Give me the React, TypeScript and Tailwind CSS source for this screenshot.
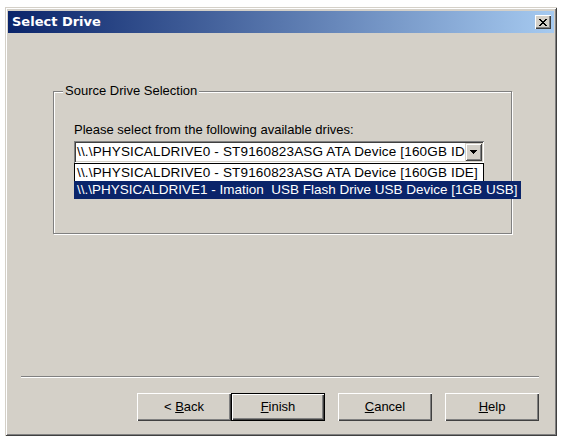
import React from "react";

const xPixels = [
  "XX....XX",
  ".XX..XX.",
  "..XXXX..",
  "...XX...",
  "..XXXX..",
  ".XX..XX.",
  "XX....XX",
];

function CloseGlyph() {
  const rects: React.ReactElement[] = [];
  xPixels.forEach((row, y) =>
    row.split("").forEach((c, x) => {
      if (c === "X") rects.push(<rect key={`${x}-${y}`} x={x} y={y} width={1} height={1} fill="#000" />);
    })
  );
  return (
    <svg width="8" height="7" viewBox="0 0 8 7" shapeRendering="crispEdges">
      {rects}
    </svg>
  );
}

function Btn({
  children,
  isDefault,
  className,
}: {
  children: React.ReactNode;
  isDefault?: boolean;
  className?: string;
}) {
  return (
    <div
      className={
        "w-[94px] h-[28px] bg-[#d4d0c8] flex items-center justify-center text-[13px] leading-[16px] text-black " +
        (isDefault
          ? "shadow-[inset_0_0_0_1px_#000,inset_2px_2px_0_#fff,inset_-2px_-2px_0_#404040,inset_-3px_-3px_0_#808080] "
          : "shadow-[inset_1px_1px_0_#fff,inset_-1px_-1px_0_#404040,inset_-2px_-2px_0_#808080] ") +
        (className ?? "")
      }
    >
      <span className="whitespace-pre">{children}</span>
    </div>
  );
}

export default function App() {
  return (
    <div className="w-[564px] h-[443px] bg-white pl-[5px] pt-[7px] font-['Liberation_Sans',Arial,sans-serif] text-black">
      <div className="w-[552px] h-[429px] bg-[#d4d0c8] px-[3px] pb-[3px] pt-[4px] flex flex-col shadow-[inset_1px_1px_0_#d4d0c8,inset_-1px_-1px_0_#404040,inset_2px_2px_0_#ffffff,inset_-2px_-2px_0_#808080]">
        {/* Title bar */}
        <div className="h-[22px] shrink-0 flex items-center bg-[linear-gradient(to_right,#0a246a,#a6caf0)]">
          <span className="pl-[4px] font-['DejaVu_Sans',sans-serif] font-bold text-[13px] leading-[16px] text-white">
            Select Drive
          </span>
          <div className="ml-auto mr-[3px] w-[16px] h-[14px] bg-[#d4d0c8] flex items-center justify-center shadow-[inset_1px_1px_0_#fff,inset_-1px_-1px_0_#404040,inset_-2px_-2px_0_#808080]">
            <CloseGlyph />
          </div>
        </div>

        {/* Body */}
        <div className="flex-1 flex flex-col">
          <div className="relative ml-[45px] mr-[42px] mt-[58px] h-[143px] border border-[#808080] shadow-[inset_1px_1px_0_#fff,1px_1px_0_#fff] pl-[20px] pt-[30px]">
            <span className="absolute left-[9px] -top-[9px] bg-[#d4d0c8] px-[2px] text-[13px] leading-[16px]">
              Source Drive Selection
            </span>
            <div className="text-[13px] leading-[16px]">Please select from the following available drives:</div>
            <div className="relative mt-[3px] w-[410px] h-[22px] bg-white flex items-center shadow-[inset_1px_1px_0_#808080,inset_-1px_-1px_0_#fff,inset_2px_2px_0_#404040,inset_-2px_-2px_0_#d4d0c8]">
              <div className="flex-1 overflow-hidden whitespace-nowrap pl-[3px] text-[13.5px] leading-[16px] tracking-[0.16px]">
                {"\\\\.\\PHYSICALDRIVE0 - ST9160823ASG ATA Device [160GB IDE]"}
              </div>
              <div className="w-[17px] h-[18px] mr-[2px] shrink-0 bg-[#d4d0c8] flex items-center justify-center shadow-[inset_1px_1px_0_#d4d0c8,inset_-1px_-1px_0_#404040,inset_2px_2px_0_#fff,inset_-2px_-2px_0_#808080]">
                <svg width="7" height="4" viewBox="0 0 7 4" shapeRendering="crispEdges">
                  <rect x="0" y="0" width="7" height="1" fill="#000" />
                  <rect x="1" y="1" width="5" height="1" fill="#000" />
                  <rect x="2" y="2" width="3" height="1" fill="#000" />
                  <rect x="3" y="3" width="1" height="1" fill="#000" />
                </svg>
              </div>
              {/* Dropdown list */}
              <div className="absolute left-0 top-[22px] w-[410px] z-10">
                <div className="h-[18px] border border-black border-b-0 bg-white pl-[2px] whitespace-nowrap overflow-hidden text-[13.5px] leading-[17px] tracking-[0.16px]">
                  {"\\\\.\\PHYSICALDRIVE0 - ST9160823ASG ATA Device [160GB IDE]"}
                </div>
                <div className="h-[18px] w-[447px] bg-[#0a246a] text-white pl-[3px] whitespace-nowrap text-[13.5px] leading-[18px]">
                  {"\\\\.\\PHYSICALDRIVE1 - Imation\u00a0 USB Flash Drive USB Device [1GB USB]"}
                </div>
              </div>
            </div>
          </div>

          <div className="mt-auto ml-[13px] mr-[15px] h-0 border-t border-b border-t-[#808080] border-b-white" />

          <div className="flex justify-end pr-[15px] mt-[15px] mb-[12px]">
            <Btn>
              {"< "}
              <span className="underline">B</span>ack
            </Btn>
            <Btn isDefault>
              <span className="underline">F</span>inish
            </Btn>
            <Btn className="ml-[13px]">
              <span className="underline">C</span>ancel
            </Btn>
            <Btn className="ml-[13px]">
              <span className="underline">H</span>elp
            </Btn>
          </div>
        </div>
      </div>
    </div>
  );
}
